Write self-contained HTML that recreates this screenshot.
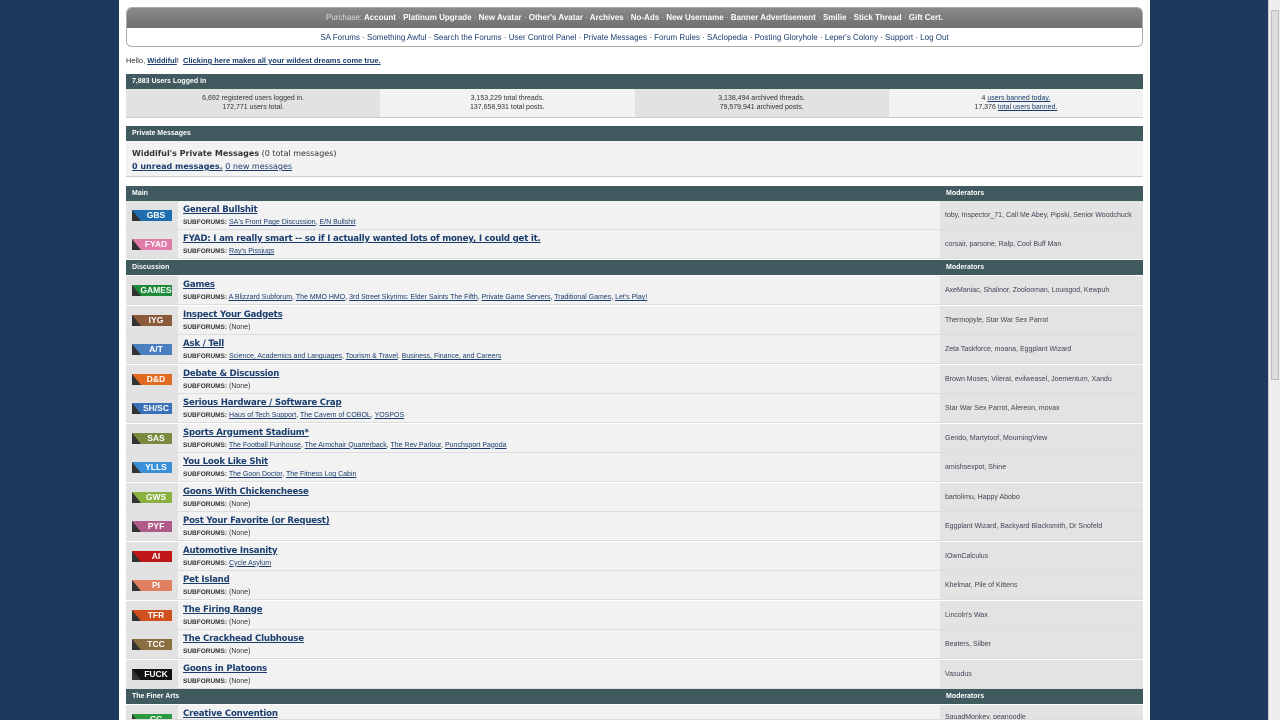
<!DOCTYPE html><html><head><style>
*{margin:0;padding:0;box-sizing:border-box}
html,body{overflow:hidden}
body{width:1280px;height:720px;background:#1d3a5e;font-family:"Liberation Sans",Arial,sans-serif;font-size:7.5px;color:#333;position:relative}
a{color:#1a3d6e}
#pg{position:absolute;left:119px;top:0;width:1031px;height:720px;background:#fff}
#sb{position:absolute;left:1268px;top:0;width:12px;height:720px;background:#eee;border-left:1px solid #ccc}
#sb div{position:absolute;left:2px;top:10px;width:8px;height:370px;background:#ddd;border:1px solid #bbb}
.ab{position:absolute}
#nav{left:126px;top:7px;width:1017px;height:40px;border:1px solid #aaa;border-radius:6px;overflow:hidden}
#nav .t{height:20px;background:linear-gradient(#8a8a8a,#6f6f6f);color:#fff;text-align:center;line-height:20px;font-weight:bold;font-size:8px}
#nav .t span{color:#ddd;font-weight:normal}
#nav .b{height:20px;background:#fff;text-align:center;line-height:20px;font-size:8px;color:#1a3d6e}
.hd{background:#415a60;color:#fff;font-weight:bold;font-size:7px;padding-left:6px;line-height:15px}
.row{position:absolute;left:126px;width:1017px;height:29px;border-bottom:1px solid #ddd;overflow:hidden}
.ic{position:absolute;left:0;top:0;width:52px;height:100%;background:#e2e2e2}
.fo{position:absolute;left:52px;top:0;width:762px;height:100%;background:#f2f2f2}
.mo{position:absolute;left:814px;top:0;width:203px;height:100%;background:#e3e3e3;line-height:29px;padding-left:5px;font-size:7px;color:#445}
.tag{position:absolute;left:6px;top:9px;width:40px;height:11px;color:#fff;font:bold 8.5px "Liberation Sans",sans-serif;text-align:center;line-height:11px;padding-left:8px}
.tag:before{content:"";position:absolute;left:0;top:0;border-left:9px solid #333;border-top:11px solid transparent}
.ti{position:absolute;left:5px;top:4px;font:bold 8.6px Verdana,"DejaVu Sans",sans-serif;color:#1a3d6e;text-decoration:underline;letter-spacing:-0.2px}
.sf{position:absolute;left:5px;top:18px;font-size:7px}
.sf b{font-size:6.5px}
.sf a{color:#1a3d6e}
.pm{font:8px Verdana,"DejaVu Sans",sans-serif}
</style></head><body>
<div id="pg"></div><div id="sb"><div></div></div>
<div id="nav" class="ab"><div class="t"><span>Purchase:</span> Account <span>·</span> Platinum Upgrade <span>·</span> New Avatar <span>·</span> Other's Avatar <span>·</span> Archives <span>·</span> No-Ads <span>·</span> New Username <span>·</span> Banner Advertisement <span>·</span> Smilie <span>·</span> Stick Thread <span>·</span> Gift Cert.</div>
<div class="b">SA Forums · Something Awful · Search the Forums · User Control Panel · Private Messages · Forum Rules · SAclopedia · Posting Gloryhole · Leper's Colony · Support · Log Out</div></div>
<div class="ab" style="left:126px;top:56px;font-size:7.5px">Hello, <a href="#"><b>Widdiful</b></a>! &nbsp;<a href="#"><b>Clicking here makes all your wildest dreams come true.</b></a></div>
<div class="ab hd" style="left:126px;top:74px;width:1017px">7,883 Users Logged In</div>
<div class="ab" style="left:126px;top:89px;width:1017px;height:29px;border-bottom:1px solid #ccc;display:flex;text-align:center;font-size:7px;line-height:9px">
<div style="flex:1;background:#e2e2e2;padding-top:5px">6,692 registered users logged in.<br>172,771 users total.</div>
<div style="flex:1;background:#f2f2f2;padding-top:5px">3,153,229 total threads.<br>137,658,931 total posts.</div>
<div style="flex:1;background:#e2e2e2;padding-top:5px">3,138,494 archived threads.<br>79,579,941 archived posts.</div>
<div style="flex:1;background:#f2f2f2;padding-top:5px">4 <a href="#">users banned today.</a><br>17,376 <a href="#">total users banned.</a></div></div>
<div class="ab hd" style="left:126px;top:126px;width:1017px">Private Messages</div>
<div class="ab pm" style="left:126px;top:141px;width:1017px;height:36px;background:#f2f2f2;border-bottom:1px solid #ccc;padding:6px 6px;line-height:13px"><b>Widdiful's Private Messages</b> (0 total messages)<br><a href="#"><b>0 unread messages.</b></a> <a href="#">0 new messages</a></div>
<div class="ab hd" style="left:126px;top:186px;width:1017px">Main<span style="position:absolute;left:820px">Moderators</span></div>
<div class="ab hd" style="left:126px;top:260px;width:1017px">Discussion<span style="position:absolute;left:820px">Moderators</span></div>
<div class="ab hd" style="left:126px;top:689px;width:1017px">The Finer Arts<span style="position:absolute;left:820px">Moderators</span></div>
<div class="row" style="top:201px"><div class="ic"><div class="tag" style="background:#1f6fb0">GBS</div></div><div class="fo"><div class="ti">General Bullshit</div><div class="sf"><b>SUBFORUMS:</b> <a href="#">SA's Front Page Discussion</a>, <a href="#">E/N Bullshit</a></div></div><div class="mo">toby, Inspector_71, Call Me Abey, Pipski, Senior Woodchuck</div></div>
<div class="row" style="top:230px"><div class="ic"><div class="tag" style="background:#e07aa8">FYAD</div></div><div class="fo"><div class="ti">FYAD: I am really smart -- so if I actually wanted lots of money, I could get it.</div><div class="sf"><b>SUBFORUMS:</b> <a href="#">Ray's Pissjugs</a></div></div><div class="mo">corsair, parsone, Ralp, Cool Buff Man</div></div>
<div class="row" style="top:276px"><div class="ic"><div class="tag" style="background:#1e8a3a">GAMES</div></div><div class="fo"><div class="ti">Games</div><div class="sf"><b>SUBFORUMS:</b> <a href="#">A Blizzard Subforum</a>, <a href="#">The MMO HMO</a>, <a href="#">3rd Street Skyrims: Elder Saints The Fifth</a>, <a href="#">Private Game Servers</a>, <a href="#">Traditional Games</a>, <a href="#">Let's Play!</a></div></div><div class="mo">AxeManiac, Shalinor, Zoolooman, Louisgod, Kewpuh</div></div>
<div class="row" style="top:305.5px"><div class="ic"><div class="tag" style="background:#8a5a3a">IYG</div></div><div class="fo"><div class="ti">Inspect Your Gadgets</div><div class="sf"><b>SUBFORUMS:</b> (None)</div></div><div class="mo">Thermopyle, Star War Sex Parrot</div></div>
<div class="row" style="top:335px"><div class="ic"><div class="tag" style="background:#4a7fc0">A/T</div></div><div class="fo"><div class="ti">Ask / Tell</div><div class="sf"><b>SUBFORUMS:</b> <a href="#">Science, Academics and Languages</a>, <a href="#">Tourism &amp; Travel</a>, <a href="#">Business, Finance, and Careers</a></div></div><div class="mo">Zeta Taskforce, moana, Eggplant Wizard</div></div>
<div class="row" style="top:364.5px"><div class="ic"><div class="tag" style="background:#e06a20">D&amp;D</div></div><div class="fo"><div class="ti">Debate &amp; Discussion</div><div class="sf"><b>SUBFORUMS:</b> (None)</div></div><div class="mo">Brown Moses, Vilerat, evilweasel, Joementum, Xandu</div></div>
<div class="row" style="top:394px"><div class="ic"><div class="tag" style="background:#3a70b8">SH/SC</div></div><div class="fo"><div class="ti">Serious Hardware / Software Crap</div><div class="sf"><b>SUBFORUMS:</b> <a href="#">Haus of Tech Support</a>, <a href="#">The Cavern of COBOL</a>, <a href="#">YOSPOS</a></div></div><div class="mo">Star War Sex Parrot, Alereon, movax</div></div>
<div class="row" style="top:423.5px"><div class="ic"><div class="tag" style="background:#7a8a40">SAS</div></div><div class="fo"><div class="ti">Sports Argument Stadium*</div><div class="sf"><b>SUBFORUMS:</b> <a href="#">The Football Funhouse</a>, <a href="#">The Armchair Quarterback</a>, <a href="#">The Rev Parlour</a>, <a href="#">Punchsport Pagoda</a></div></div><div class="mo">Gendo, Martytoof, MourningView</div></div>
<div class="row" style="top:453px"><div class="ic"><div class="tag" style="background:#3a90d8">YLLS</div></div><div class="fo"><div class="ti">You Look Like Shit</div><div class="sf"><b>SUBFORUMS:</b> <a href="#">The Goon Doctor</a>, <a href="#">The Fitness Log Cabin</a></div></div><div class="mo">amishsexpot, Shine</div></div>
<div class="row" style="top:482.5px"><div class="ic"><div class="tag" style="background:#8ab040">GWS</div></div><div class="fo"><div class="ti">Goons With Chickencheese</div><div class="sf"><b>SUBFORUMS:</b> (None)</div></div><div class="mo">bartolimu, Happy Abobo</div></div>
<div class="row" style="top:512px"><div class="ic"><div class="tag" style="background:#b05a8a">PYF</div></div><div class="fo"><div class="ti">Post Your Favorite (or Request)</div><div class="sf"><b>SUBFORUMS:</b> (None)</div></div><div class="mo">Eggplant Wizard, Backyard Blacksmith, Dr Snofeld</div></div>
<div class="row" style="top:541.5px"><div class="ic"><div class="tag" style="background:#c01818">AI</div></div><div class="fo"><div class="ti">Automotive Insanity</div><div class="sf"><b>SUBFORUMS:</b> <a href="#">Cycle Asylum</a></div></div><div class="mo">IOwnCalculus</div></div>
<div class="row" style="top:571px"><div class="ic"><div class="tag" style="background:#e08060">PI</div></div><div class="fo"><div class="ti">Pet Island</div><div class="sf"><b>SUBFORUMS:</b> (None)</div></div><div class="mo">Khelmar, Pile of Kittens</div></div>
<div class="row" style="top:600.5px"><div class="ic"><div class="tag" style="background:#d05020">TFR</div></div><div class="fo"><div class="ti">The Firing Range</div><div class="sf"><b>SUBFORUMS:</b> (None)</div></div><div class="mo">Lincoln's Wax</div></div>
<div class="row" style="top:630px"><div class="ic"><div class="tag" style="background:#8a7040">TCC</div></div><div class="fo"><div class="ti">The Crackhead Clubhouse</div><div class="sf"><b>SUBFORUMS:</b> (None)</div></div><div class="mo">Beaters, Silber</div></div>
<div class="row" style="top:659.5px"><div class="ic"><div class="tag" style="background:#111">FUCK</div></div><div class="fo"><div class="ti">Goons in Platoons</div><div class="sf"><b>SUBFORUMS:</b> (None)</div></div><div class="mo">Vasudus</div></div>
<div class="row" style="top:705px;height:15px"><div class="ic"><div class="tag" style="background:#2a9a40">CC</div></div><div class="fo"><div class="ti">Creative Convention</div></div><div class="mo" style="line-height:26px">SquadMonkey, peanoodle</div></div>
</body></html>
